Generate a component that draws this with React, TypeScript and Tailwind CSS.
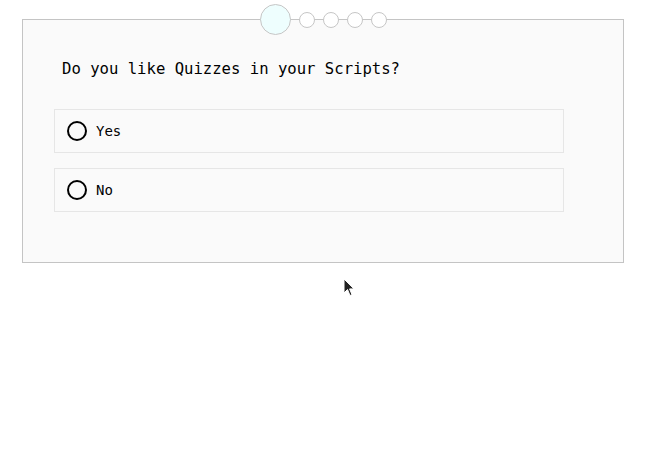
import { useState } from 'react';

const options = ['Yes', 'No'];

export default function App() {
  const [picked, setPicked] = useState<string | null>(null);

  return (
    <div className="relative w-[647px] h-[462px] bg-white" style={{ fontFamily: '"DejaVu Sans Mono", monospace' }}>
      <div className="pt-[19px] pl-[22px]">
        <div className="relative w-[602px] h-[244px] border border-[#c4c4c4] bg-[#fafafa] px-[31px]">
          {/* step indicator */}
          <div className="absolute left-0 right-0 top-[-16px] flex justify-center items-center h-[31px]">
            <div className="w-[31px] h-[31px] rounded-full border border-[#c6c6c6] bg-[#eefefe]" />
            {[0, 1, 2, 3].map((i) => (
              <div key={i} className="flex items-center">
                <div className="w-[8px] h-px bg-[#c6c6c6]" />
                <div className="w-[16px] h-[16px] rounded-full border border-[#c6c6c6] bg-white" />
              </div>
            ))}
          </div>

          <p className="pt-[37px] pl-[8px] text-[15.6px] leading-[24px] text-black">
            Do you like Quizzes in your Scripts?
          </p>

          <div className="mt-[28px] flex flex-col gap-[15px] w-[510px]">
            {options.map((o) => (
              <label
                key={o}
                onClick={() => setPicked(o)}
                className="flex items-center gap-[9px] h-[44px] pl-[12px] border border-[#e6e6e6] bg-[#fafafa] cursor-pointer"
              >
                <span className="w-[20px] h-[20px] rounded-full border-2 border-black flex items-center justify-center">
                  {picked === o && <span className="w-[10px] h-[10px] rounded-full bg-black" />}
                </span>
                <span className="text-[14px] text-black">{o}</span>
              </label>
            ))}
          </div>
        </div>
      </div>

      <svg className="absolute left-[343px] top-[278px]" width="12" height="20" viewBox="0 0 12 20">
        <path d="M1 1 L1 15 L4.5 11.5 L7 17.5 L9 16.7 L6.6 10.9 L11 10.9 Z" fill="#222" stroke="#fff" strokeWidth="1" />
      </svg>
    </div>
  );
}
